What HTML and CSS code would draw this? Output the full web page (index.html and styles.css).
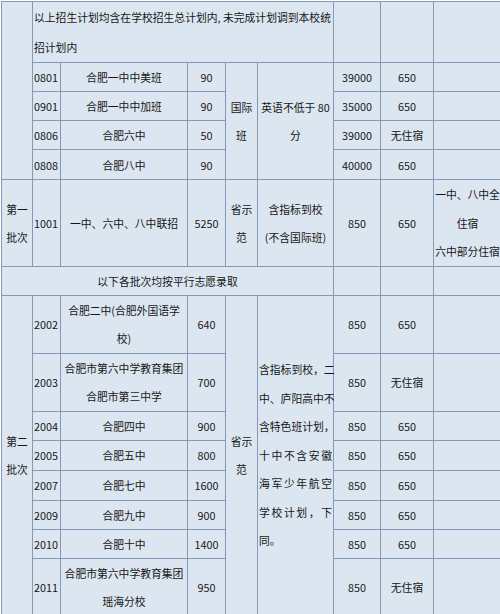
FILE: index.html
```html
<!DOCTYPE html>
<html lang="zh-CN">
<head>
<meta charset="utf-8">
<title>招生计划表</title>
<link rel="stylesheet" href="styles.css">
</head>
<body>
<table class="plan">
  <colgroup>
    <col class="c-batch">
    <col class="c-code">
    <col class="c-name">
    <col class="c-count">
    <col class="c-type">
    <col class="c-cond">
    <col class="c-score">
    <col class="c-fee">
    <col class="c-note">
  </colgroup>
  <tbody>
    <tr class="r-top">
      <td rowspan="5"></td>
      <td colspan="5" class="left note-text">以上招生计划均含在学校招生总计划内, 未完成计划调到本校统<br>招计划内</td>
      <td></td>
      <td></td>
      <td></td>
    </tr>
    <tr>
      <td class="code">0801</td>
      <td>合肥一中中美班</td>
      <td>90</td>
      <td rowspan="4">国际<br>班</td>
      <td rowspan="4">英语不低于 80<br>分</td>
      <td>39000</td>
      <td>650</td>
      <td></td>
    </tr>
    <tr>
      <td class="code">0901</td>
      <td>合肥一中中加班</td>
      <td>90</td>
      <td>35000</td>
      <td>650</td>
      <td></td>
    </tr>
    <tr>
      <td class="code">0806</td>
      <td>合肥六中</td>
      <td>50</td>
      <td>39000</td>
      <td>无住宿</td>
      <td></td>
    </tr>
    <tr class="r-30">
      <td class="code">0808</td>
      <td>合肥八中</td>
      <td>90</td>
      <td>40000</td>
      <td>650</td>
      <td></td>
    </tr>
    <tr class="r-tall">
      <td>第一<br>批次</td>
      <td class="code">1001</td>
      <td>一中、六中、八中联招</td>
      <td>5250</td>
      <td>省示<br>范</td>
      <td>含指标到校<br>(不含国际班)</td>
      <td>850</td>
      <td>650</td>
      <td class="remark">一中、八中全<br>住宿<br>六中部分住宿</td>
    </tr>
    <tr>
      <td colspan="6">以下各批次均按平行志愿录取</td>
      <td></td>
      <td></td>
      <td></td>
    </tr>
    <tr class="r-double">
      <td rowspan="8">第二<br>批次</td>
      <td class="code">2002</td>
      <td>合肥二中(合肥外国语学<br>校)</td>
      <td>640</td>
      <td rowspan="8">省示<br>范</td>
      <td rowspan="8" class="cond">
        <span class="jl">含指标到校，二</span>
        <span class="jl">中、庐阳高中不</span>
        <span class="jl">含特色班计划，</span>
        <span class="jl">十中不含安徽</span>
        <span class="jl">海军少年航空</span>
        <span class="jl">学校计划，下</span>
        <span class="ln">同。</span>
      </td>
      <td>850</td>
      <td>650</td>
      <td></td>
    </tr>
    <tr class="r-double">
      <td class="code">2003</td>
      <td>合肥市第六中学教育集团<br>合肥市第三中学</td>
      <td>700</td>
      <td>850</td>
      <td>无住宿</td>
      <td></td>
    </tr>
    <tr class="r-28">
      <td class="code">2004</td>
      <td>合肥四中</td>
      <td>900</td>
      <td>850</td>
      <td>650</td>
      <td></td>
    </tr>
    <tr class="r-30">
      <td class="code">2005</td>
      <td>合肥五中</td>
      <td>800</td>
      <td>850</td>
      <td>650</td>
      <td></td>
    </tr>
    <tr class="r-30">
      <td class="code">2007</td>
      <td>合肥七中</td>
      <td>1600</td>
      <td>850</td>
      <td>650</td>
      <td></td>
    </tr>
    <tr>
      <td class="code">2009</td>
      <td>合肥九中</td>
      <td>900</td>
      <td>850</td>
      <td>650</td>
      <td></td>
    </tr>
    <tr>
      <td class="code">2010</td>
      <td>合肥十中</td>
      <td>1400</td>
      <td>850</td>
      <td>650</td>
      <td></td>
    </tr>
    <tr class="r-last">
      <td class="code">2011</td>
      <td>合肥市第六中学教育集团<br>瑶海分校</td>
      <td>950</td>
      <td>850</td>
      <td>无住宿</td>
      <td></td>
    </tr>
  </tbody>
</table>
</body>
</html>
```

FILE: styles.css
```css
html, body {
  margin: 0;
  padding: 0;
  background: #ffffff;
  overflow: hidden;
}

body {
  padding: 1px 0 0 1px;
  font-family: "Noto Sans CJK SC", "Noto Sans", sans-serif;
  font-size: 10.8px;
  color: #161616;
}

.plan {
  border-collapse: collapse;
  table-layout: fixed;
  width: 500px;
  background: #dce6f1;
}

.c-batch { width: 31px; }
.c-code { width: 28px; }
.c-name { width: 127px; }
.c-count { width: 38px; }
.c-type { width: 32px; }
.c-cond { width: 76px; }
.c-score { width: 47px; }
.c-fee { width: 53px; }
.c-note { width: 68px; }

.plan td {
  border: 1px solid #8399ba;
  padding: 0;
  height: 28px;
  line-height: 28px;
  text-align: center;
  vertical-align: middle;
  white-space: nowrap;
  overflow: visible;
}

.plan td.left {
  text-align: left;
  padding-left: 1px;
}

.plan td.note-text {
  line-height: 30px;
}

.plan td.code {
  text-align: left;
  padding-left: 1px;
}

.plan td.remark {
  line-height: 28.5px;
}

.plan tr.r-top td { height: 59px; }
.plan tr.r-30 td { height: 29px; }
.plan tr.r-28 td { height: 27px; }
.plan tr.r-tall td { height: 85px; }
.plan tr.r-double td { height: 57px; }
.plan tr.r-last td { height: 55px; }

.plan td.cond {
  text-align: left;
  padding: 0 1px;
  line-height: 28.5px;
}

.jl {
  display: block;
  text-align: justify;
  text-align-last: justify;
}

.ln {
  display: block;
  text-align: left;
}
```
